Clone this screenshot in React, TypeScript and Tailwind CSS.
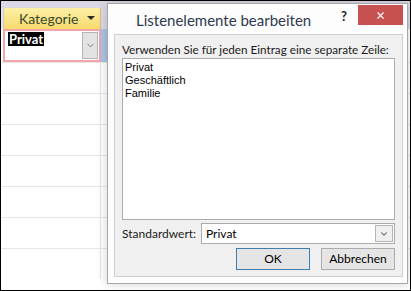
import { ChevronDown, X } from "lucide-react";

const rows = [0, 1, 2, 3, 4, 5, 6];

export default function App() {
  return (
    <div className="relative w-[411px] h-[291px] overflow-hidden border border-black bg-white font-['Lato',sans-serif]">
      {/* datasheet behind the dialog */}
      <div className="flex flex-col">
        <div className="h-[7px] bg-[#dcd7e6]" />
        <div className="flex h-[21px]">
          <div className="w-[3px] bg-[#e8e8ec] border-r border-[#c9c9d2]" />
          <div className="w-[97px] flex items-center justify-between pl-[15px] pr-[5px] bg-gradient-to-b from-[#fdf0a6] to-[#f8d96b] border-r border-[#d9c27a]">
            <span className="text-[14px] leading-none text-[#344a2e]">Kategorie</span>
            <svg width="8" height="5" viewBox="0 0 8 5"><path d="M0 0h8L4 4z" fill="#2b2b2b" /></svg>
          </div>
          <div className="flex-1 bg-[#dcd7e6]" />
        </div>
        <div className="flex h-[33px]">
          <div className="w-[2px]" />
          <div className="w-[98px] flex items-stretch justify-between border-2 border-[#f2a5aa] pl-[3px] pr-px py-px">
            <span className="self-start px-px bg-black text-white text-[13px] leading-[14px] font-bold">Privat</span>
            <div className="w-[16px] flex items-center justify-center bg-[#e3e3e3] border border-[#b5b5b5]">
              <ChevronDown size={11} strokeWidth={1.5} color="#555" />
            </div>
          </div>
          <div className="w-[7px] bg-[#a9c4e6]" />
          <div className="flex-1" />
        </div>
        {rows.map((r) => (
          <div key={r} className="flex h-[31px] border-t border-[#e6e6e6]">
            <div className="w-[100px] border-r border-[#e6e6e6]" />
            <div className="flex-1" />
          </div>
        ))}
      </div>

      {/* dialog */}
      <div className="absolute left-[106px] top-[2px] w-[301px] h-[281px] flex flex-col bg-[#fdfdfd] border border-[#a8a8a8] shadow-[0_0_10px_rgba(0,0,0,0.18)]">
        <div className="h-[30px] flex items-start">
          <div className="flex-1 pl-[28px] pt-[6px] text-[15px] leading-[20px] text-[#2e3a4c] whitespace-nowrap">Listenelemente bearbeiten</div>
          <div className="pt-[4px] pr-[11px] text-[13px] leading-[16px] font-bold text-[#222]">?</div>
          <div className="w-[45px] h-[20px] mt-px mr-[4px] flex items-center justify-center bg-[#c75050]">
            <X size={11} strokeWidth={2.5} color="#fff" />
          </div>
        </div>
        <div className="flex-1 ml-[6px] mb-[6px] mr-[4px] flex flex-col bg-[#f0f0f0] border border-[#cfcfcf] px-[7px] pt-[6px]">
          <div className="text-[11.7px] leading-[16px] text-[#1a1a1a] whitespace-nowrap">Verwenden Sie für jeden Eintrag eine separate Zeile:</div>
          <div className="mt-[1px] h-[162px] bg-white border border-[#acacac] px-[2px] py-[2px] font-['Liberation_Sans',sans-serif] text-[11px] leading-[13px] text-black">
            <div>Privat</div>
            <div>Geschäftlich</div>
            <div>Familie</div>
          </div>
          <div className="mt-[3px] flex items-center justify-between">
            <span className="text-[12px] text-[#1a1a1a] whitespace-nowrap">Standardwert:</span>
            <div className="w-[194px] h-[21px] flex items-center justify-between bg-white border border-[#acacac] pl-[4px] pr-px">
              <span className="text-[12px] text-black">Privat</span>
              <div className="w-[18px] h-[17px] flex items-center justify-center bg-[#f0f0f0] border border-[#b5b5b5]">
                <ChevronDown size={10} strokeWidth={2.5} color="#555" />
              </div>
            </div>
          </div>
          <div className="mt-[4px] flex justify-end gap-[11px]">
            <button className="w-[74px] h-[22px] flex items-center justify-center bg-[#e5e5e5] border border-[#3c7fb1] text-[12px] text-black">OK</button>
            <button className="w-[74px] h-[22px] flex items-center justify-center bg-[#e5e5e5] border border-[#acacac] text-[12px] text-black">Abbrechen</button>
          </div>
        </div>
      </div>
    </div>
  );
}
